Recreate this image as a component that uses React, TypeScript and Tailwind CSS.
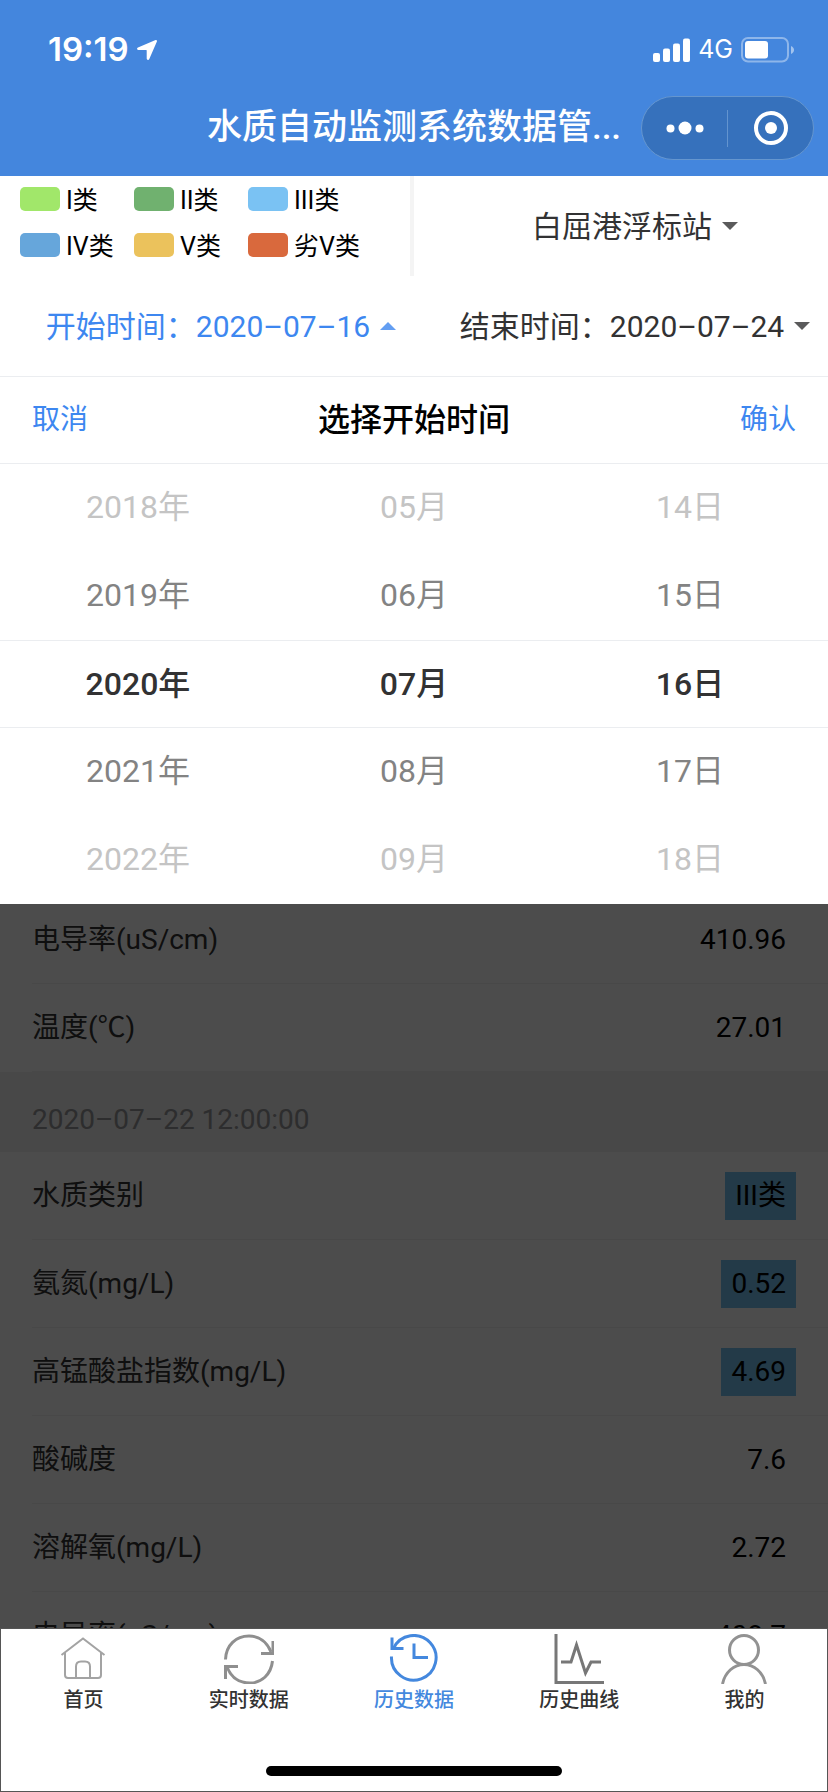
import { useState } from "react";
import type { ReactNode } from "react";
import { clsx } from "clsx";

const legend = [
  { label: "I类", color: "bg-[#a1e76a]" },
  { label: "II类", color: "bg-[#70b16f]" },
  { label: "III类", color: "bg-[#7ac2f3]" },
  { label: "IV类", color: "bg-[#66a6db]" },
  { label: "V类", color: "bg-[#ebc25c]" },
  { label: "劣V类", color: "bg-[#d9693d]" },
];

const columns = [
  { name: "年", values: ["2018年", "2019年", "2020年", "2021年", "2022年"] },
  { name: "月", values: ["05月", "06月", "07月", "08月", "09月"] },
  { name: "日", values: ["14日", "15日", "16日", "17日", "18日"] },
];

const wheelStyles = [
  "text-[#c4c4c4]",
  "text-[#838383]",
  "font-medium text-[#323233] border-y border-[#ebedf0]",
  "text-[#838383]",
  "text-[#c4c4c4]",
];

type Reading = { label: string; value: string; flagged?: boolean };

const previousReadings: Reading[] = [
  { label: "电导率(uS/cm)", value: "410.96" },
  { label: "温度(℃)", value: "27.01" },
];

const readings: Reading[] = [
  { label: "水质类别", value: "III类", flagged: true },
  { label: "氨氮(mg/L)", value: "0.52", flagged: true },
  { label: "高锰酸盐指数(mg/L)", value: "4.69", flagged: true },
  { label: "酸碱度", value: "7.6" },
  { label: "溶解氧(mg/L)", value: "2.72" },
  { label: "电导率(uS/cm)", value: "408.7" },
];

function StatusBar() {
  return (
    <div className="flex h-20 items-center justify-between pt-5 pr-[34px] pl-12">
      <div className="flex items-center gap-2">
        <span className="font-['Inter',sans-serif] text-[33px] font-semibold">19:19</span>
        <svg className="h-5 w-5" viewBox="0 0 20 20" fill="currentColor" aria-hidden="true">
          <path d="M18.6.1 1 7.5C-.4 8.100-.2 10 1.300 10H9.200q.5 0 .5.5V18.600c0 1.600 2 1.900 2.600.5L19.900 1.500C20.200.6 19.400-.2 18.600.1Z" />
        </svg>
      </div>
      <div className="flex items-center gap-2">
        <svg className="h-6 w-[37px]" viewBox="0 0 37 24" fill="currentColor" aria-hidden="true">
          <rect x="0" y="15" width="7" height="9" rx="2" />
          <rect x="10" y="10.500" width="7" height="13.500" rx="2" />
          <rect x="20" y="5.500" width="7" height="18.500" rx="2" />
          <rect x="30" y="0.500" width="7" height="23.500" rx="2" />
        </svg>
        <span className="font-['Inter',sans-serif] text-[25px]">4G</span>
        <svg className="h-[26px] w-[53px]" viewBox="0 0 53 26" aria-hidden="true">
          <rect x="1" y="1" width="46" height="23.500" rx="6" fill="none" stroke="#fff" strokeOpacity=".4" strokeWidth="2" />
          <rect x="4" y="4" width="23" height="17.500" rx="3" fill="#fff" />
          <path d="M50 9c4 1.500 4 6.500 0 8Z" fill="#fff" fillOpacity=".5" />
        </svg>
      </div>
    </div>
  );
}

function TitleBar() {
  return (
    <div className="grid h-24 grid-cols-[1fr_auto_1fr] items-center">
      <h1 className="col-start-2 text-[35px] font-medium">水质自动监测系统数据管...</h1>
      <div className="mr-[14px] flex h-16 w-[173px] items-center justify-self-end rounded-full border border-[#6596cf] bg-[#3671bc]">
        <button type="button" aria-label="更多" className="flex flex-1 justify-center">
          <svg className="h-4 w-[38px]" viewBox="0 0 38 16" fill="currentColor">
            <circle cx="4.500" cy="8.500" r="4" />
            <circle cx="19" cy="8" r="6.500" />
            <circle cx="33.500" cy="8.500" r="4" />
          </svg>
        </button>
        <span className="h-[37px] w-px bg-[#6394cf]" />
        <button type="button" aria-label="关闭" className="flex flex-1 justify-center">
          <svg className="h-9 w-9" viewBox="0 0 36 36">
            <circle cx="18" cy="18" r="15" fill="none" stroke="#fff" strokeWidth="4" />
            <circle cx="18" cy="18" r="6" fill="#fff" />
          </svg>
        </button>
      </div>
    </div>
  );
}

function Dropdown({ text, open = false }: { text: string; open?: boolean }) {
  return (
    <button
      type="button"
      aria-expanded={open}
      className={clsx(
        "flex h-[100px] items-center justify-center gap-[10px] pl-7 text-[30px] whitespace-nowrap",
        open ? "text-[#3d87f0]" : "text-[#323233]",
      )}
    >
      {text}
      <svg
        className={clsx("h-2 w-4 shrink-0 opacity-80", open && "rotate-180")}
        viewBox="0 0 16 8"
        fill="currentColor"
        aria-hidden="true"
      >
        <path d="M0 0h16L8 8Z" />
      </svg>
    </button>
  );
}

function ReadingRow({ label, value, flagged }: Reading) {
  return (
    <div className="flex h-[88px] shrink-0 items-center justify-between border-b border-[#f0f0f0] pr-8">
      <dt className="text-[#323233]">{label}</dt>
      <dd className={clsx("px-[10px] leading-[48px] text-black", flagged && "bg-[#75c1f0]")}>{value}</dd>
    </div>
  );
}

const tabs: { label: string; icon: ReactNode }[] = [
  {
    label: "首页",
    icon: (
      <g stroke="#a3a3a3" strokeWidth="2">
        <path d="M2.500 21 24 4.500l21.500 16.500" />
        <path d="M6 18.500V41q0 3 3 3h30q3 0 3-3V18.500" />
        <path d="M17 44V32.500q0-5 5-5h4q5 0 5 5V44" />
      </g>
    ),
  },
  {
    label: "实时数据",
    icon: (
      <g stroke="#8f8f8f" strokeWidth="3">
        <path d="M1.500 25.500C2 11 12 2 25 2c10 0 18 6 22 16" />
        <path d="M49 7v12.500H37" />
        <path d="M48.500 27C47 41 37 49 26 49 15 49 7 43 3 33" />
        <path d="M1.500 45V32.500h12.500" />
      </g>
    ),
  },
  {
    label: "历史数据",
    icon: (
      <g stroke="#4488de" strokeWidth="3">
        <path d="M2.500 22.500A22.300 22.300 0 1 0 4.500 14.500" />
        <path d="M3 3.500V14.500H14.500" />
        <path d="M25 9.500V23.500H39" />
      </g>
    ),
  },
  {
    label: "历史曲线",
    icon: (
      <g stroke="#777" strokeWidth="3">
        <path d="M2 0v48.500h48" />
        <path d="M7 28h10l5.500-17 9 28 5.500-11h10" />
      </g>
    ),
  },
  {
    label: "我的",
    icon: (
      <g stroke="#929292" strokeWidth="3">
        <circle cx="25" cy="16" r="14.500" />
        <path d="M3.500 50C6 38 15 30.500 25 30.500S44 38 46.500 50" />
      </g>
    ),
  },
];

export default function App() {
  const [active, setActive] = useState(2);

  return (
    <div className="flex h-screen flex-col bg-white font-['Roboto','Noto_Sans_CJK_SC',sans-serif]">
      <header className="shrink-0 bg-[#4486dd] text-white">
        <StatusBar />
        <TitleBar />
      </header>

      <section className="grid shrink-0 grid-cols-2">
        <ul className="grid h-[100px] grid-cols-[114px_114px_auto] grid-rows-[46px_46px] border-r-4 border-[#f4f4f4] pl-5 text-[25px] text-black">
          {legend.map((item) => (
            <li key={item.label} className="flex items-center gap-[6px] whitespace-nowrap">
              <span className={clsx("h-6 w-10 shrink-0 rounded-[5px]", item.color)} />
              <span className="pt-1">{item.label}</span>
            </li>
          ))}
        </ul>
        <Dropdown text="白屈港浮标站" />
        <Dropdown text="开始时间：2020–07–16" open />
        <Dropdown text="结束时间：2020–07–24" />
      </section>

      <section aria-label="选择开始时间" className="z-10 shrink-0 border-t border-[#ebedf0] bg-white">
        <div className="flex h-[87px] items-center justify-between border-b border-[#ebedf0] px-8 text-[28px] text-[#3d87f0]">
          <button type="button">取消</button>
          <h2 className="text-[32px] font-medium text-black">选择开始时间</h2>
          <button type="button">确认</button>
        </div>
        <div className="grid grid-cols-3 text-center text-[32px] leading-[86px]">
          {columns.map((column) => (
            <ul key={column.name}>
              {column.values.map((value, i) => (
                <li key={value} className={clsx("h-[88px]", wheelStyles[i])}>
                  {value}
                </li>
              ))}
            </ul>
          ))}
        </div>
      </section>

      <main className="relative min-h-0 flex-1 overflow-hidden text-[28px]">
        <dl className="-mt-2 pl-8">
          {previousReadings.map((row) => (
            <ReadingRow key={row.label} {...row} />
          ))}
        </dl>
        <h3 className="flex h-20 items-center bg-[#f0f0f0] pt-4 pl-8 text-[#969799]">2020–07–22 12:00:00</h3>
        <dl className="pl-8">
          {readings.map((row) => (
            <ReadingRow key={row.label} {...row} />
          ))}
        </dl>
        <div className="absolute inset-0 bg-black/70" />
      </main>

      <nav className="flex h-[164px] shrink-0 flex-col justify-between border border-[#555] bg-white pb-[15px]">
        <div className="grid grid-cols-5">
          {tabs.map((tab, i) => (
            <button
              key={tab.label}
              type="button"
              onClick={() => setActive(i)}
              className={clsx(
                "flex flex-col items-center gap-[2px] pt-[5px] text-xl font-medium",
                i === active ? "text-[#4488de]" : "text-[#333]",
              )}
            >
              <svg className="h-[50px] w-[50px]" viewBox="0 0 50 50" fill="none" aria-hidden="true">
                {tab.icon}
              </svg>
              {tab.label}
            </button>
          ))}
        </div>
        <span className="h-[10px] w-[296px] self-center rounded-full bg-black" />
      </nav>
    </div>
  );
}
